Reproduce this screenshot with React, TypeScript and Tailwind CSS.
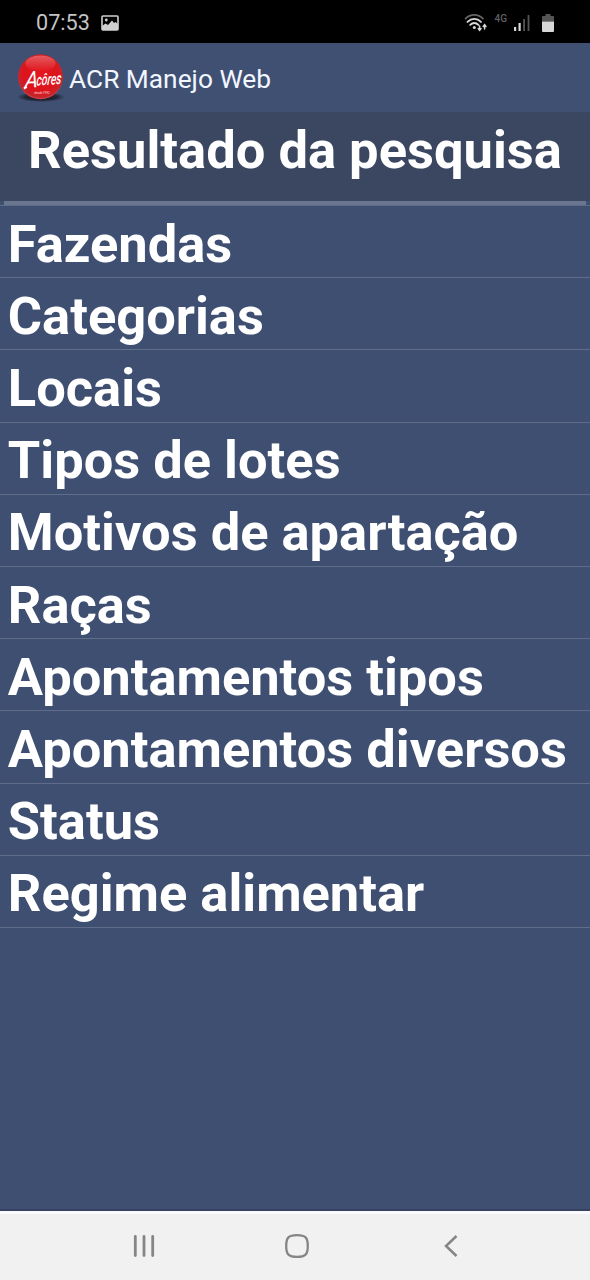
const items = [
  "Fazendas",
  "Categorias",
  "Locais",
  "Tipos de lotes",
  "Motivos de apartação",
  "Raças",
  "Apontamentos tipos",
  "Apontamentos diversos",
  "Status",
  "Regime alimentar",
];

function StatusBar() {
  return (
    <div className="flex h-[43px] shrink-0 items-center justify-between bg-black pt-[3px] pr-[35px] pl-9">
      <div className="flex items-center gap-[11px]">
        <span className="text-[21.600px] leading-none text-[#c4c4c4]">07:53</span>
        <svg width="18" height="16" viewBox="0 0 18 16" fill="none">
          <rect x="1" y="1" width="16" height="14" rx="1" stroke="#d0d0d0" strokeWidth="1.6" />
          <circle cx="5.3" cy="5" r="1.4" fill="#d0d0d0" />
          <path d="M1 11l3.5-2.5L7 10l4-4.500L13 8l1.500-1L17 9v6H1z" fill="#d0d0d0" />
        </svg>
      </div>
      <div className="flex h-5 items-center">
        <svg width="24" height="18" viewBox="0 0 24 18" fill="none" strokeLinecap="round">
          <path d="M1.500 4.700C6.500 -.3 14 -.3 19 4.700" stroke="#666" strokeWidth="1.700" />
          <path d="M3.500 7.900c4-4 9.500-4 13.500 0" stroke="#d8d8d8" strokeWidth="1.900" />
          <path d="M6.200 10.900c2.500-2.500 5.700-2.500 8.200 0" stroke="#d8d8d8" strokeWidth="1.900" />
          <circle cx="10.300" cy="13.600" r="1.500" fill="#d8d8d8" />
          <path d="M15.600 12v4M14.200 14.600l1.400 1.700 1.400-1.700M20.600 15v-4M19.200 12.400l1.400-1.700 1.400 1.700" stroke="#d8d8d8" strokeWidth="1.500" />
        </svg>
        <span className="-mt-[8px] ml-[7px] text-[10px] leading-none font-medium text-[#606060] antialiased">4G</span>
        <svg className="ml-[7px]" width="16" height="18" viewBox="0 0 16 18">
          <path d="M0 13h2.200v4H0z" fill="#d8d8d8" />
          <path d="M4.500 9h2.200v8H4.500z" fill="#d8d8d8" />
          <path d="M9.200 5h1.800v12H9.200z" fill="#555" />
          <path d="M13.600 1h1.800v16h-1.800z" fill="#555" />
        </svg>
        <svg className="ml-[11px]" width="14" height="19" viewBox="0 0 14 19">
          <path d="M4.500 0h5v2H12a1 1 0 0 1 1 1v4.500H1V3a1 1 0 0 1 1-1h2.500z" fill="#555" />
          <path d="M1 7.500h12V17a1 1 0 0 1-1 1H2a1 1 0 0 1-1-1z" fill="#d8d8d8" />
        </svg>
      </div>
    </div>
  );
}

function Logo() {
  return (
    <svg className="shrink-0 overflow-visible" width="48" height="48" viewBox="0 0 48 48">
      <defs>
        <radialGradient id="ball" cx="50%" cy="45%" r="55%">
          <stop offset="0%" stopColor="#e5161d" />
          <stop offset="70%" stopColor="#dc141c" />
          <stop offset="92%" stopColor="#c5262c" />
          <stop offset="100%" stopColor="#cf5055" />
        </radialGradient>
        <linearGradient id="shine" x1="0" y1="0" x2="0" y2="1">
          <stop offset="0%" stopColor="#fff" stopOpacity=".3" />
          <stop offset="100%" stopColor="#fff" stopOpacity="0" />
        </linearGradient>
        <radialGradient id="shadow">
          <stop offset="0%" stopColor="#160c18" />
          <stop offset="65%" stopColor="#20202f" stopOpacity=".9" />
          <stop offset="100%" stopColor="#20202f" stopOpacity="0" />
        </radialGradient>
      </defs>
      <ellipse cx="24" cy="43" rx="24" ry="5" fill="url(#shadow)" />
      <circle cx="23.500" cy="22.800" r="22.500" fill="url(#ball)" />
      <ellipse cx="23.500" cy="9.500" rx="15" ry="8" fill="url(#shine)" />
      <g fill="#fff" fontStyle="italic" transform="translate(5.500 1) rotate(-4 24 26) skewX(-10)">
        <text x="7" y="31.500" fontSize="23" fontWeight="400" textLength="13" lengthAdjust="spacingAndGlyphs">
          A
        </text>
        <text x="18.500" y="30" fontSize="16" fontWeight="500" textLength="25" lengthAdjust="spacingAndGlyphs">
          côres
        </text>
        <path d="M6.500 32l3-1.500" stroke="#fff" strokeWidth="1.800" />
      </g>
      <text x="17" y="39.500" fontSize="4" fill="#f3b5b5" textLength="16">
        desde 1992
      </text>
    </svg>
  );
}

function NavigationBar() {
  return (
    <div className="flex h-[69px] shrink-0 items-center justify-between border-t-[3px] border-[#f9fbff] bg-[#f1f1f1] pr-[132px] pb-[2px] pl-[133px] text-[#858585]">
      <svg width="22" height="24" viewBox="0 0 22 24" fill="none" stroke="currentColor" strokeWidth="2.800" strokeLinecap="round">
        <path d="M2.300 2.500v19M11 2.500v19M19.700 2.500v19" />
      </svg>
      <svg className="-ml-[6px]" width="26" height="26" viewBox="0 0 26 26" fill="none" stroke="currentColor" strokeWidth="2.300">
        <path d="M13 2.200c8.500 0 10.800 2.300 10.800 10.800S21.500 23.800 13 23.800 2.200 21.500 2.200 13 4.500 2.200 13 2.200z" />
      </svg>
      <svg width="14" height="24" viewBox="0 0 14 24" fill="none" stroke="currentColor" strokeWidth="2.500">
        <path d="M12.500 2L2 12l10.500 10" />
      </svg>
    </div>
  );
}

export default function App() {
  return (
    <div className="flex h-[1280px] w-[590px] flex-col overflow-hidden bg-[#3f4f72] font-[Roboto,sans-serif]">
      <StatusBar />
      <header className="flex h-[69px] shrink-0 items-center bg-[#3f5073] pl-[17px]">
        <Logo />
        <span className="ml-1 pt-[3px] text-[26.300px] leading-none whitespace-nowrap text-[#f2f6ff]">
          ACR Manejo Web
        </span>
      </header>
      <main className="flex grow flex-col border-b-2 border-[#36425f]">
        <div className="h-[93px] shrink-0 bg-[linear-gradient(#3b4761_89px,#3f4f72_89px)] px-1">
          <h1 className="flex h-[93px] justify-center border-b-4 border-[#6a7590] pt-2 text-[52.500px] leading-[60px] font-bold whitespace-nowrap text-white">
            Resultado da pesquisa
          </h1>
        </div>
        <ul className="border-t border-[#5f6c88]">
          {items.map((item) => (
            <li
              key={item}
              className="h-[72.200px] border-b border-[#5f6d8a] pt-[7.600px] pl-[7.800px] text-[52.450px] leading-[60px] font-bold whitespace-nowrap text-white"
            >
              {item}
            </li>
          ))}
        </ul>
      </main>
      <NavigationBar />
    </div>
  );
}
